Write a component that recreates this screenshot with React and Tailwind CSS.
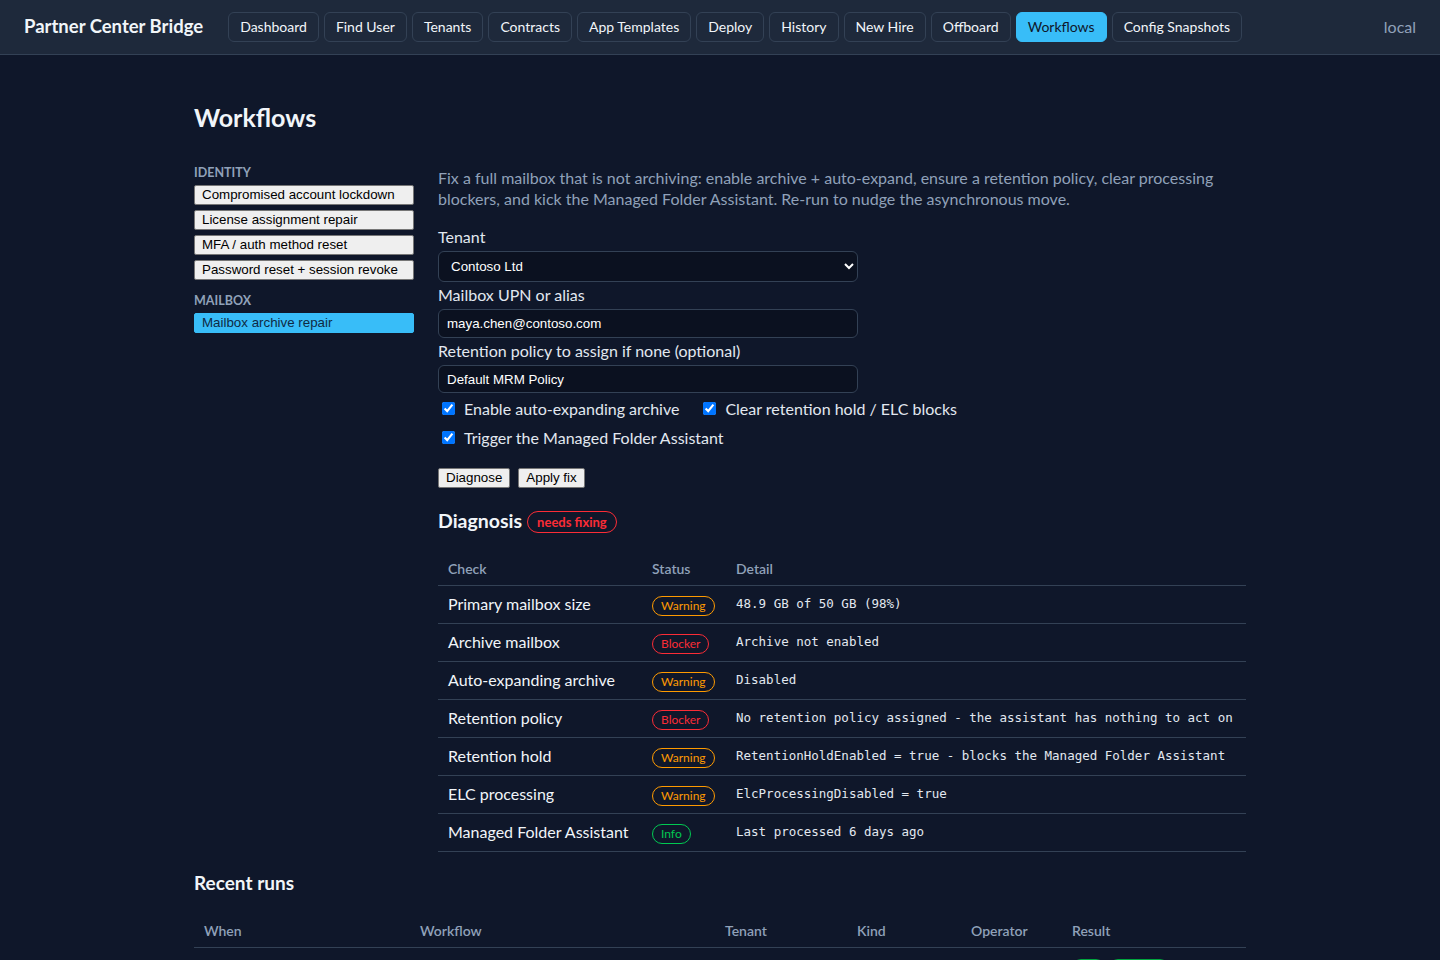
import { useState } from 'react';

const NAV = ['Dashboard', 'Find User', 'Tenants', 'Contracts', 'App Templates', 'Deploy', 'History', 'New Hire', 'Offboard', 'Workflows', 'Config Snapshots'];

const GROUPS = [
    { name: 'Identity', items: ['Compromised account lockdown', 'License assignment repair', 'MFA / auth method reset', 'Password reset + session revoke'] },
    { name: 'Mailbox', items: ['Mailbox archive repair'] },
];

const CHECKS = [
    { check: 'Primary mailbox size', status: 'Warning', detail: '48.9 GB of 50 GB (98%)' },
    { check: 'Archive mailbox', status: 'Blocker', detail: 'Archive not enabled' },
    { check: 'Auto-expanding archive', status: 'Warning', detail: 'Disabled' },
    { check: 'Retention policy', status: 'Blocker', detail: 'No retention policy assigned - the assistant has nothing to act on' },
    { check: 'Retention hold', status: 'Warning', detail: 'RetentionHoldEnabled = true - blocks the Managed Folder Assistant' },
    { check: 'ELC processing', status: 'Warning', detail: 'ElcProcessingDisabled = true' },
    { check: 'Managed Folder Assistant', status: 'Info', detail: 'Last processed 6 days ago' },
];

const sans = 'font-["Segoe_UI","Lato","Noto_Sans",sans-serif]';

const StatusBadge = ({ status }) => {
    const tone = {
        Warning: 'border-amber-500 text-amber-500',
        Blocker: 'border-red-500 text-red-500',
        Info: 'border-green-500 text-green-500',
    }[status];
    return (
        <span className={`inline-block rounded-full border px-[8px] leading-[18px] text-[12px] ${tone}`}>{status}</span>
    );
};

const Field = ({ label, children }) => (
    <div className="flex flex-col">
        <label className="text-[16px] leading-[21px] text-slate-200">{label}</label>
        <div className="mt-[4px]">{children}</div>
    </div>
);

export default function App() {
    const [active, setActive] = useState('Mailbox archive repair');

    return (
        <div className={`min-h-screen bg-[#0f172a] text-slate-100 ${sans}`}>
            <header className="h-[55px] bg-[#1e293b] border-b border-[#334155] flex items-center px-6">
                <div className="text-[18.5px] font-bold text-slate-100 mr-[25px]">Partner Center Bridge</div>
                <nav className="flex gap-[5px]">
                    {NAV.map(n => (
                        <button
                            key={n}
                            className={`h-[30px] px-[11px] pb-[2px] rounded-[6px] border text-[14px] ${n === 'Workflows'
                                ? 'bg-[#38bdf8] border-[#38bdf8] text-[#0f172a]'
                                : 'bg-[#1e293b] border-[#334155] text-slate-100'}`}
                        >
                            {n}
                        </button>
                    ))}
                </nav>
                <div className="ml-auto text-[16px] text-slate-400">local</div>
            </header>

            <main className="max-w-[1100px] mx-auto px-6 pt-[44px]">
                <h1 className="text-[25px] font-bold text-slate-100 leading-[36px]">Workflows</h1>

                <div className="flex gap-6 mt-[28px]">
                    {/* workflow picker */}
                    <aside className="w-[220px] shrink-0 pt-[2px]">
                        {GROUPS.map(g => (
                            <div key={g.name} className="mb-[13px]">
                                <div className="text-[12.5px] font-bold uppercase text-slate-400 leading-[16px] mb-[4px]">{g.name}</div>
                                <div className="flex flex-col gap-[5px]">
                                    {g.items.map(it => (
                                        <button
                                            key={it}
                                            onClick={() => setActive(it)}
                                            className={`w-full text-left h-[20px] px-[7px] border rounded-[2px] font-["Liberation_Sans",Arial,sans-serif] text-[13.33px] leading-[18px] ${active === it
                                                ? 'bg-[#38bdf8] border-[#38bdf8] text-[#0f2a44]'
                                                : 'bg-[#efefef] border-[#767676] text-black'}`}
                                        >
                                            {it}
                                        </button>
                                    ))}
                                </div>
                            </div>
                        ))}
                    </aside>

                    <section className="flex-1 min-w-0 pt-[4px]">
                        <p className="text-[16px] leading-[21px] text-slate-400 max-w-[800px]">
                            Fix a full mailbox that is not archiving: enable archive + auto-expand, ensure a retention policy, clear processing blockers, and kick the Managed Folder Assistant. Re-run to nudge the asynchronous move.
                        </p>

                        <div className="flex flex-col gap-[2px] mt-[17px] w-[420px]">
                            <Field label="Tenant">
                                <select className='w-full h-[31px] px-[8px] rounded-[6px] border border-[#334155] bg-[#0b1120] text-white font-["Liberation_Sans",Arial,sans-serif] text-[13.33px]'>
                                    <option>Contoso Ltd</option>
                                    <option>Fabrikam Inc</option>
                                </select>
                            </Field>
                            <Field label="Mailbox UPN or alias">
                                <input
                                    defaultValue="maya.chen@contoso.com"
                                    className='w-full h-[29px] px-[8px] rounded-[6px] border border-[#334155] bg-[#0b1120] text-white font-["Liberation_Sans",Arial,sans-serif] text-[13.33px]'
                                />
                            </Field>
                            <Field label="Retention policy to assign if none (optional)">
                                <input
                                    defaultValue="Default MRM Policy"
                                    className='w-full h-[28px] px-[8px] rounded-[6px] border border-[#334155] bg-[#0b1120] text-white font-["Liberation_Sans",Arial,sans-serif] text-[13.33px]'
                                />
                            </Field>
                        </div>

                        <div className="flex flex-wrap gap-x-[20px] mt-[1px] text-[16px] text-slate-200 w-[560px]">
                            <label className="flex items-center gap-[9px] h-[29px] pl-[4px]">
                                <input type="checkbox" defaultChecked className="w-[13px] h-[13px] accent-[#0075ff]" />
                                Enable auto-expanding archive
                            </label>
                            <label className="flex items-center gap-[9px] h-[29px] pl-[4px]">
                                <input type="checkbox" defaultChecked className="w-[13px] h-[13px] accent-[#0075ff]" />
                                Clear retention hold / ELC blocks
                            </label>
                            <label className="flex items-center gap-[9px] h-[29px] pl-[4px]">
                                <input type="checkbox" defaultChecked className="w-[13px] h-[13px] accent-[#0075ff]" />
                                Trigger the Managed Folder Assistant
                            </label>
                        </div>

                        <div className="flex gap-[8px] mt-[16px]">
                            {['Diagnose', 'Apply fix'].map(b => (
                                <button key={b} className='h-[20px] px-[7px] bg-[#efefef] border border-[#767676] rounded-[2px] text-black font-["Liberation_Sans",Arial,sans-serif] text-[13.33px] leading-[18px]'>
                                    {b}
                                </button>
                            ))}
                        </div>

                        <div className="flex items-center gap-[5px] mt-[19px]">
                            <h2 className="text-[19.5px] font-bold text-slate-100 leading-[28px]">Diagnosis</h2>
                            <span className="rounded-full border border-red-500 text-red-500 text-[13px] font-bold leading-[20px] px-[9px] mt-[2px]">needs fixing</span>
                        </div>

                        <table className="w-full mt-[17px] border-collapse table-fixed">
                            <colgroup>
                                <col className="w-[204px]" />
                                <col className="w-[84px]" />
                                <col />
                            </colgroup>
                            <thead>
                                <tr className="border-b border-[#334155] text-left text-[14px] font-semibold text-slate-400">
                                    <th className="px-[10px] h-[33px] font-semibold">Check</th>
                                    <th className="px-[10px] h-[33px] font-semibold">Status</th>
                                    <th className="px-[10px] h-[33px] font-semibold">Detail</th>
                                </tr>
                            </thead>
                            <tbody>
                                {CHECKS.map(c => (
                                    <tr key={c.check} className="border-b border-[#334155] h-[38px]">
                                        <td className="px-[10px] text-[16px] text-slate-100 whitespace-nowrap">{c.check}</td>
                                        <td className="px-[10px]"><StatusBadge status={c.status} /></td>
                                        <td className='px-[10px] text-[12.5px] text-slate-200 font-["DejaVu_Sans_Mono","Liberation_Mono",monospace] whitespace-nowrap'>{c.detail}</td>
                                    </tr>
                                ))}
                            </tbody>
                        </table>
                    </section>
                </div>

                <h2 className="text-[19px] font-bold text-slate-100 mt-[19px] leading-[24px]">Recent runs</h2>
                <table className="w-full mt-[20px] border-collapse">
                    <thead>
                        <tr className="border-b border-[#334155] text-left text-[14px] text-slate-400">
                            <th className="px-[10px] h-[33px] font-semibold w-[216px]">When</th>
                            <th className="px-[10px] h-[33px] font-semibold w-[305px]">Workflow</th>
                            <th className="px-[10px] h-[33px] font-semibold w-[132px]">Tenant</th>
                            <th className="px-[10px] h-[33px] font-semibold w-[114px]">Kind</th>
                            <th className="px-[10px] h-[33px] font-semibold w-[101px]">Operator</th>
                            <th className="px-[10px] h-[33px] font-semibold">Result</th>
                        </tr>
                    </thead>
                    <tbody>
                        <tr className="border-b border-[#334155] h-[38px] text-[14px] text-slate-200">
                            <td className="px-[10px]">2 min ago</td>
                            <td className="px-[10px]">Mailbox archive repair</td>
                            <td className="px-[10px]">Contoso Ltd</td>
                            <td className="px-[10px]">diagnose</td>
                            <td className="px-[10px]">local</td>
                            <td className="px-[10px]">
                                <span className="inline-block rounded-full bg-green-600 px-[10px] leading-[18px] text-[12px] text-white mr-[4px]">ok</span>
                                <span className="inline-block rounded-full bg-green-600 px-[10px] leading-[18px] text-[12px] text-white">success</span>
                            </td>
                        </tr>
                    </tbody>
                </table>
                <div className="h-[40px]" />
            </main>
        </div>
    );
}
